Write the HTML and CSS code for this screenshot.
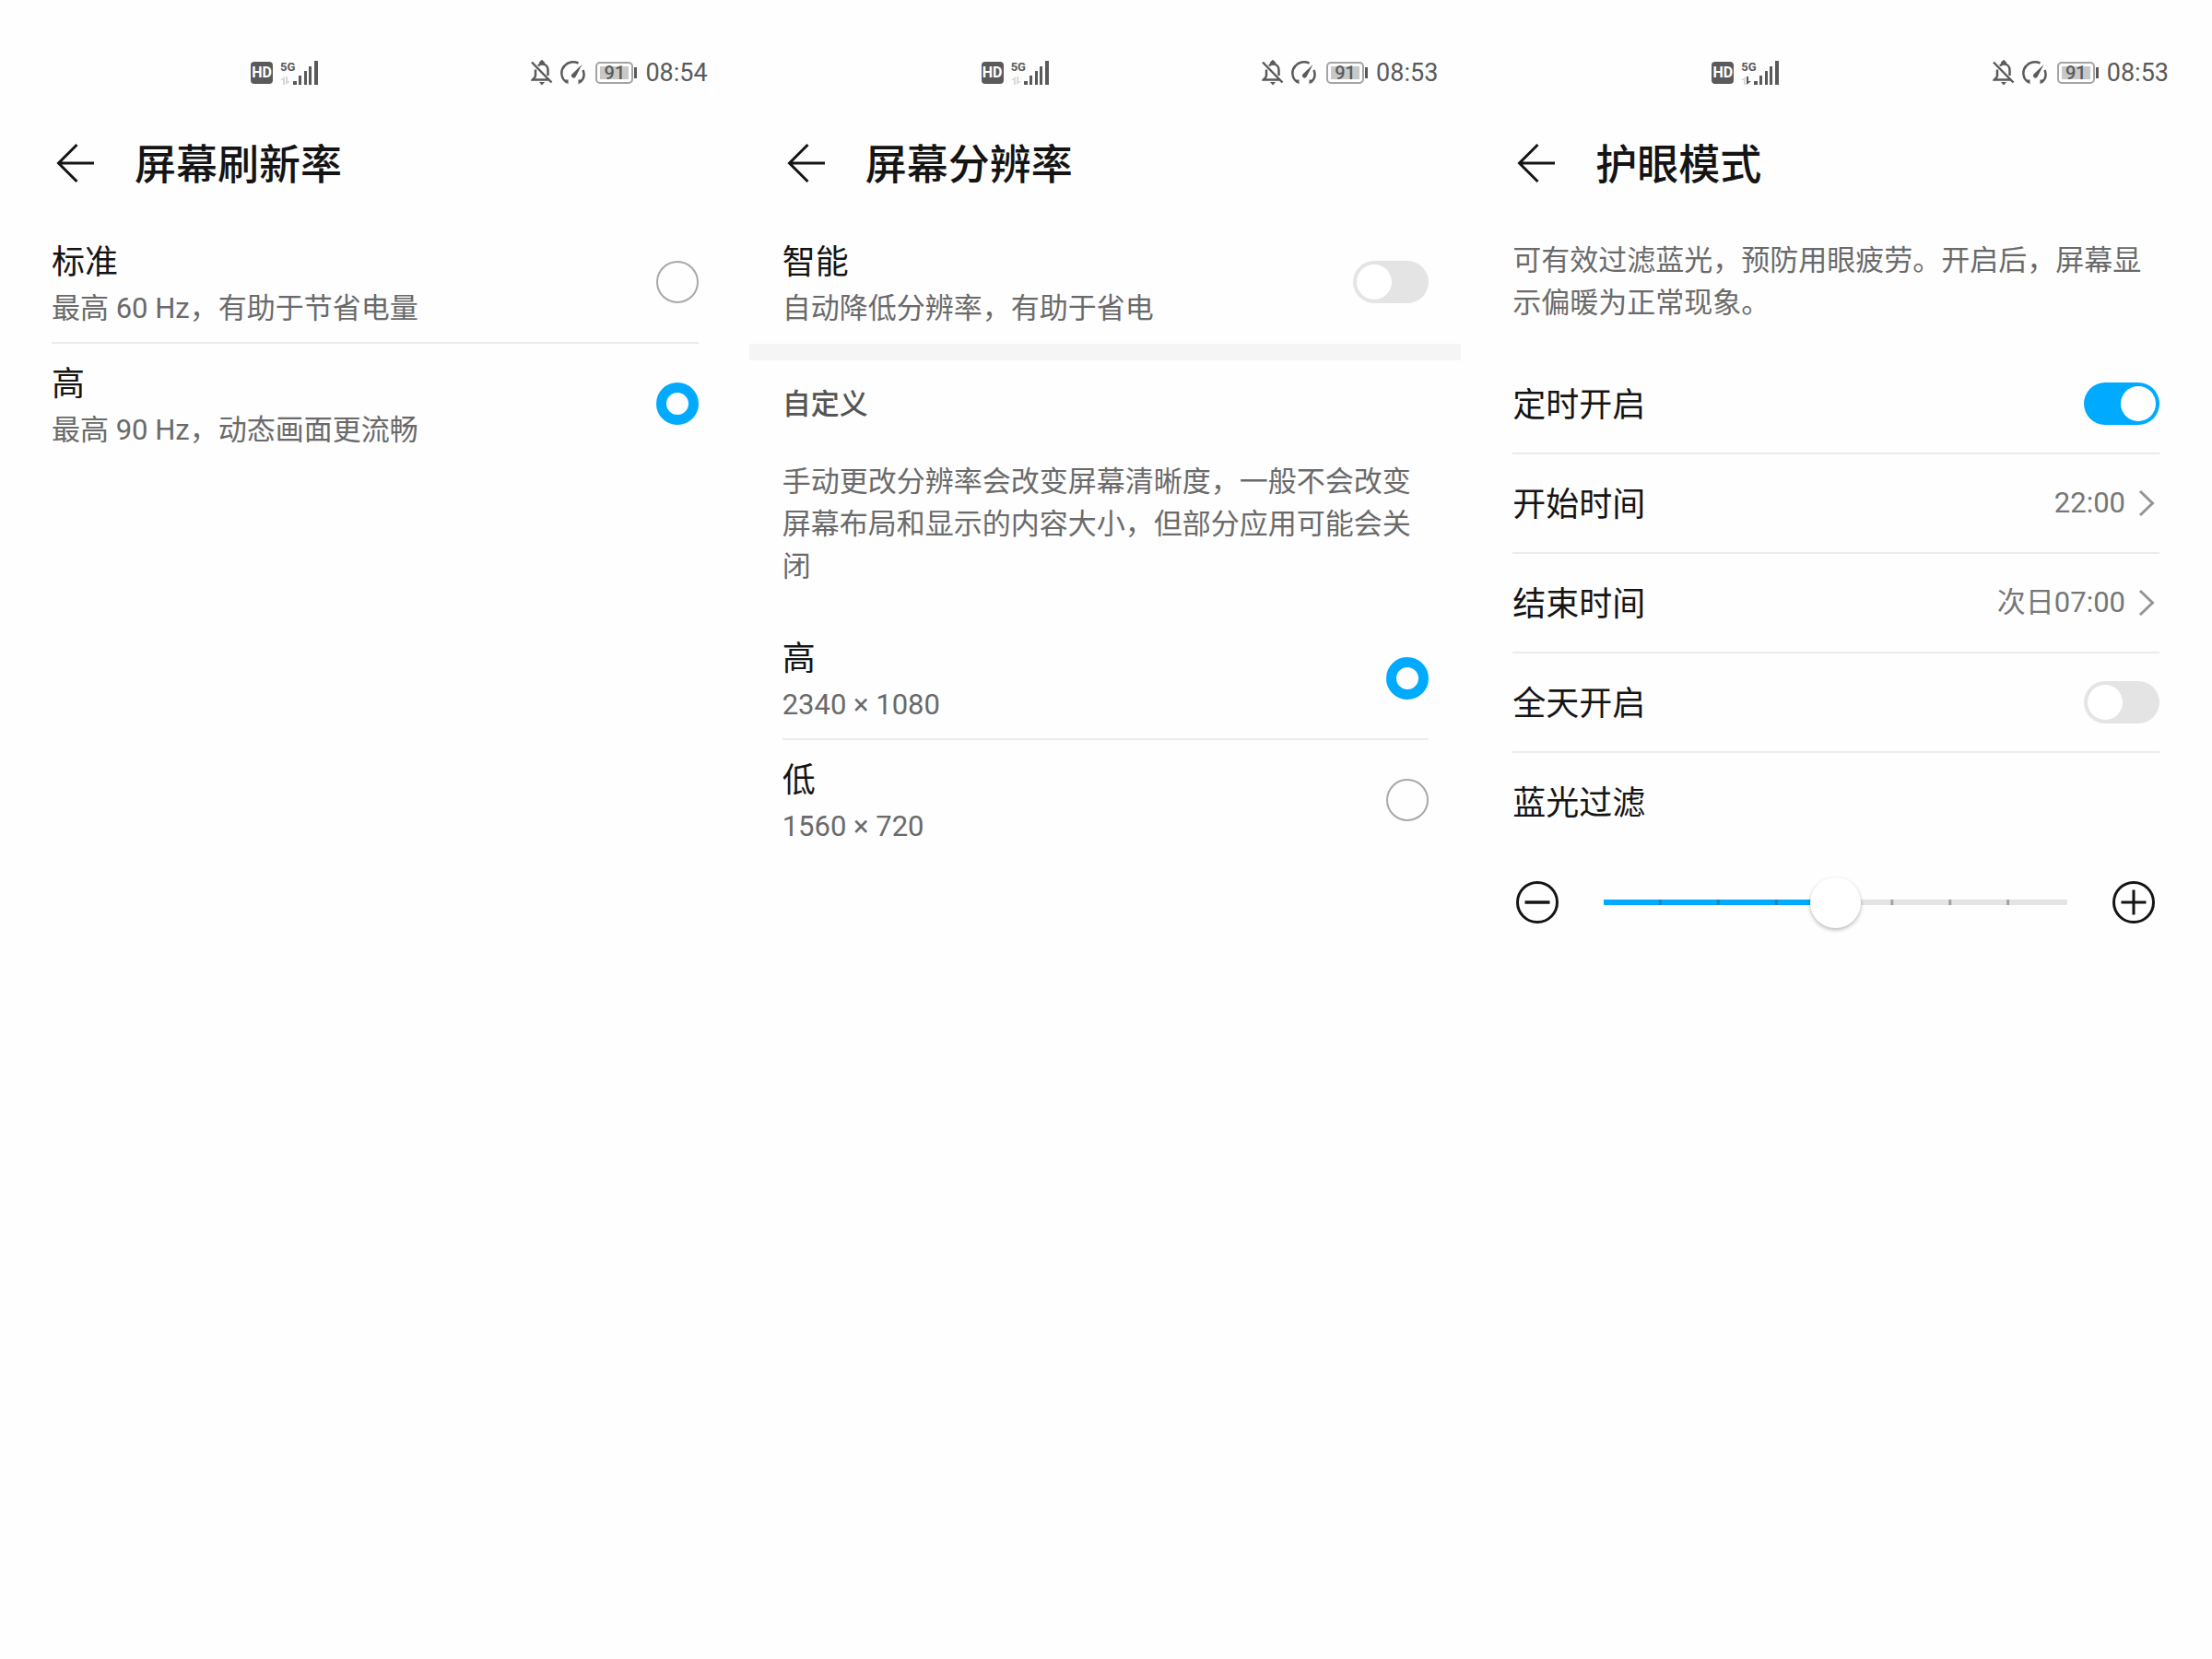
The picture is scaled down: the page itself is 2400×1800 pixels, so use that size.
FILE: index.html
```html
<!DOCTYPE html>
<html lang="zh-CN">
<head>
<meta charset="utf-8">
<meta name="viewport" content="width=device-width, initial-scale=1">
<title>显示设置</title>
<link rel="stylesheet" href="styles.css">
</head>
<body>
<svg class="sprite" aria-hidden="true">
  <symbol id="i-signal" viewBox="0 0 28 27">
    <rect x="0" y="22" width="4" height="4"/>
    <rect x="6" y="16" width="3" height="10"/>
    <rect x="12" y="11" width="3" height="15"/>
    <rect x="17" y="6" width="3" height="20"/>
    <rect x="23" y="0" width="4" height="26"/>
  </symbol>
  <symbol id="i-bell" viewBox="0 0 24 28">
    <path d="M1 2.500 22.500 24.500M8 6.500C9 5 10.500 4.500 12 4.500c4 0 6.500 3 6.500 6.500v6M5 10.500v6.500c0 2-1.500 3-3 4.500h17M9.500 4 12 1.500 14.500 4" fill="none" stroke="currentColor" stroke-width="2.500"/>
    <path d="M9 24h6l-3 3.500z" fill="currentColor"/>
  </symbol>
  <symbol id="i-gauge" viewBox="0 0 28 28">
    <path d="M7 24.500C0 20 0 11 4.500 6.500 8 2.500 14 1 19.500 3.500M24.500 11c2 5 1 10-3.500 13.500" fill="none" stroke="currentColor" stroke-width="2.500"/>
    <path d="M23.500 5 16.500 18.500a2.500 2.500 0 1 1-4-3z" fill="currentColor"/>
    <path d="M3.500 21.500h5v5zM24.500 21.500h-5v5z" fill="currentColor"/>
  </symbol>
  <symbol id="i-back" viewBox="0 0 42 44">
    <path d="M41 22H3M22.500 2 2.500 22l20 20" fill="none" stroke="currentColor" stroke-width="3"/>
  </symbol>
  <symbol id="i-next" viewBox="0 0 18 30">
    <path d="M2 2 15.500 15 2 28" fill="none" stroke="currentColor" stroke-width="3"/>
  </symbol>
  <symbol id="i-minus" viewBox="0 0 46 46">
    <circle cx="23" cy="23" r="21.500" fill="none" stroke="currentColor" stroke-width="3"/>
    <path d="M9.500 23h27" stroke="currentColor" stroke-width="3.500"/>
  </symbol>
  <symbol id="i-plus" viewBox="0 0 46 46">
    <circle cx="23" cy="23" r="21.500" fill="none" stroke="currentColor" stroke-width="3"/>
    <path d="M9.500 23h27M23 9.500v27" stroke="currentColor" stroke-width="3"/>
  </symbol>
  <symbol id="i-up" viewBox="0 0 5 9"><path d="M5 0v9H3V4H0z"/></symbol>
  <symbol id="i-down" viewBox="0 0 5 9"><path d="M0 9V0h2v5h3z"/></symbol>
</svg>

<main class="screens">
  <section class="screen">
    <div class="status">
      <div class="status-left">
        <span class="hd">HD</span>
        <div class="network">
          <span class="gen">5G</span>
          <span class="traffic"><svg class="arrow"><use href="#i-up"/></svg><svg class="arrow"><use href="#i-down"/></svg></span>
        </div>
        <svg class="signal"><use href="#i-signal"/></svg>
      </div>
      <div class="status-right">
        <svg class="bell"><use href="#i-bell"/></svg>
        <svg class="gauge"><use href="#i-gauge"/></svg>
        <span class="battery"><span class="level">91</span></span>
        <time class="clock">08:54</time>
      </div>
    </div>
    <header class="bar">
      <button class="back" type="button" aria-label="返回"><svg class="back-icon"><use href="#i-back"/></svg></button>
      <h1 class="title">屏幕刷新率</h1>
    </header>
    <div class="list">
      <label class="row">
        <span class="text"><span class="name">标准</span><span class="note">最高 60 Hz，有助于节省电量</span></span>
        <input class="radio" type="radio" name="rate">
      </label>
      <label class="row">
        <span class="text"><span class="name">高</span><span class="note">最高 90 Hz，动态画面更流畅</span></span>
        <input class="radio" type="radio" name="rate" checked>
      </label>
    </div>
  </section>

  <section class="screen">
    <div class="status">
      <div class="status-left">
        <span class="hd">HD</span>
        <div class="network">
          <span class="gen">5G</span>
          <span class="traffic"><svg class="arrow"><use href="#i-up"/></svg><svg class="arrow"><use href="#i-down"/></svg></span>
        </div>
        <svg class="signal"><use href="#i-signal"/></svg>
      </div>
      <div class="status-right">
        <svg class="bell"><use href="#i-bell"/></svg>
        <svg class="gauge"><use href="#i-gauge"/></svg>
        <span class="battery"><span class="level">91</span></span>
        <time class="clock">08:53</time>
      </div>
    </div>
    <header class="bar">
      <button class="back" type="button" aria-label="返回"><svg class="back-icon"><use href="#i-back"/></svg></button>
      <h1 class="title">屏幕分辨率</h1>
    </header>
    <div class="list">
      <label class="row">
        <span class="text"><span class="name">智能</span><span class="note">自动降低分辨率，有助于省电</span></span>
        <input class="switch" type="checkbox" role="switch">
      </label>
    </div>
    <div class="band"></div>
    <h2 class="group">自定义</h2>
    <p class="help help-group">手动更改分辨率会改变屏幕清晰度，一般不会改变屏幕布局和显示的内容大小，但部分应用可能会关闭</p>
    <div class="list">
      <label class="row">
        <span class="text"><span class="name">高</span><span class="note">2340 × 1080</span></span>
        <input class="radio" type="radio" name="resolution" checked>
      </label>
      <label class="row">
        <span class="text"><span class="name">低</span><span class="note">1560 × 720</span></span>
        <input class="radio" type="radio" name="resolution">
      </label>
    </div>
  </section>

  <section class="screen">
    <div class="status">
      <div class="status-left">
        <span class="hd">HD</span>
        <div class="network">
          <span class="gen">5G</span>
          <span class="traffic"><svg class="arrow"><use href="#i-up"/></svg><svg class="arrow arrow-active"><use href="#i-down"/></svg></span>
        </div>
        <svg class="signal"><use href="#i-signal"/></svg>
      </div>
      <div class="status-right">
        <svg class="bell"><use href="#i-bell"/></svg>
        <svg class="gauge"><use href="#i-gauge"/></svg>
        <span class="battery"><span class="level">91</span></span>
        <time class="clock">08:53</time>
      </div>
    </div>
    <header class="bar">
      <button class="back" type="button" aria-label="返回"><svg class="back-icon"><use href="#i-back"/></svg></button>
      <h1 class="title">护眼模式</h1>
    </header>
    <p class="help help-top">可有效过滤蓝光，预防用眼疲劳。开启后，屏幕显示偏暖为正常现象。</p>
    <div class="list">
      <label class="row row-single">
        <span class="name">定时开启</span>
        <input class="switch" type="checkbox" role="switch" checked>
      </label>
      <button class="row row-single" type="button">
        <span class="name">开始时间</span>
        <span class="value">22:00<svg class="next"><use href="#i-next"/></svg></span>
      </button>
      <button class="row row-single" type="button">
        <span class="name">结束时间</span>
        <span class="value">次日07:00<svg class="next"><use href="#i-next"/></svg></span>
      </button>
      <label class="row row-single">
        <span class="name">全天开启</span>
        <input class="switch" type="checkbox" role="switch">
      </label>
      <div class="row row-single">
        <label class="name" for="filter">蓝光过滤</label>
      </div>
    </div>
    <div class="slider">
      <button class="step" type="button" aria-label="减弱"><svg class="step-icon"><use href="#i-minus"/></svg></button>
      <input class="range" id="filter" type="range" min="0" max="8" value="4" style="--fill: 50%">
      <button class="step" type="button" aria-label="增强"><svg class="step-icon"><use href="#i-plus"/></svg></button>
    </div>
  </section>
</main>
</body>
</html>
```

FILE: styles.css
```css
:root {
  --accent: #00aaff;
  --ink: #141414;
  --muted: #6a6a6a;
  --status: #5a5a5a;
  --line: #ebebeb;
  --side: 36px;
}

* {
  box-sizing: border-box;
}

body {
  margin: 0;
  background: #fefefe;
  color: var(--ink);
  font-family: Roboto, "Noto Sans CJK SC", sans-serif;
}

button {
  margin: 0;
  padding: 0;
  border: 0;
  background: none;
  color: inherit;
  font: inherit;
  text-align: left;
}

svg {
  display: block;
  fill: currentColor;
}

.sprite {
  display: none;
}

.screens {
  display: grid;
  grid-template-columns: repeat(3, minmax(0, 1fr));
  gap: 20px;
  padding: 55px 22px 55px 20px;
}

/* Status bar */
.status {
  display: flex;
  align-items: center;
  justify-content: space-between;
  height: 48px;
  padding: 0 25px 0 252px;
  color: var(--status);
}

.status-left,
.status-right {
  display: flex;
  align-items: center;
}

.hd {
  width: 24px;
  margin-right: 8px;
  border-radius: 4px;
  background: var(--status);
  color: #fff;
  font-size: 16px;
  font-weight: 700;
  line-height: 24px;
  text-align: center;
}

.network {
  width: 14px;
}

.gen {
  display: block;
  font-size: 13px;
  font-weight: 700;
  line-height: 14px;
}

.traffic {
  display: flex;
  gap: 1px;
  padding-top: 3px;
  color: #d8d8d8;
}

.arrow {
  width: 5px;
  height: 9px;
}

.arrow-active {
  color: var(--status);
}

.signal {
  width: 28px;
  height: 27px;
}

.bell {
  width: 24px;
  height: 28px;
  margin-right: 8px;
}

.gauge {
  width: 28px;
  height: 28px;
  margin-right: 10px;
}

.battery {
  position: relative;
  width: 41px;
  margin-right: 13px;
  padding: 3px;
  border: 2px solid #a4a4a4;
  border-radius: 5px;
}

.battery::after {
  content: "";
  position: absolute;
  top: 4px;
  right: -6px;
  width: 3px;
  height: 12px;
  background: var(--status);
}

.level {
  display: block;
  background: #c8c8c8;
  font-size: 20px;
  font-weight: 500;
  line-height: 14px;
  text-align: center;
}

.clock {
  font-size: 27px;
  line-height: 32px;
}

/* Title bar */
.bar {
  display: flex;
  align-items: center;
  gap: 43px;
  height: 128px;
  margin-top: 10px;
  padding: 0 41px;
}

.back-icon {
  width: 42px;
  height: 44px;
}

.title {
  margin: 0;
  padding-top: 6px;
  font-size: 45px;
  font-weight: 500;
  line-height: 60px;
}

/* Setting rows */
.list {
  padding: 0 35px 0 var(--side);
}

.row {
  display: flex;
  align-items: center;
  justify-content: space-between;
  box-sizing: content-box;
  width: 100%;
  min-height: 130px;
}

.row-single {
  min-height: 106px;
}

.row + .row {
  border-top: 2px solid var(--line);
}

.text {
  padding-top: 8px;
}

.name,
.note {
  display: block;
  line-height: 50px;
}

.name {
  font-size: 36px;
}

.row-single .name {
  padding-top: 4px;
}

.note {
  color: var(--muted);
  font-size: 31px;
}

.value {
  display: flex;
  align-items: center;
  gap: 14px;
  padding-right: 5px;
  color: #777;
  font-size: 31px;
  line-height: 40px;
}

.next {
  width: 18px;
  height: 30px;
  color: #959595;
}

.band {
  height: 18px;
  margin-top: 2px;
  background: #f5f5f5;
}

.group {
  margin: 0;
  padding: 0 var(--side);
  color: #555;
  font-size: 31px;
  font-weight: 500;
  line-height: 96px;
}

.help {
  margin: 0;
  color: var(--muted);
  font-size: 31px;
  line-height: 46px;
}

.help-group {
  padding: 13px var(--side) 33px;
}

.help-top {
  padding: 19px var(--side) 33px;
}

/* Controls */
.radio,
.switch,
.range {
  margin: 0;
  appearance: none;
}

.radio {
  flex: none;
  width: 46px;
  height: 46px;
  border: 2px solid #a8a8a8;
  border-radius: 50%;
}

.radio:checked {
  border: 11px solid var(--accent);
}

.switch {
  display: flex;
  flex: none;
  width: 82px;
  height: 46px;
  padding: 4px;
  border-radius: 23px;
  background: #e4e4e4;
}

.switch::before {
  content: "";
  width: 38px;
  height: 38px;
  border-radius: 50%;
  background: #fff;
}

.switch:checked {
  justify-content: flex-end;
  background: var(--accent);
}

.slider {
  display: flex;
  align-items: center;
  gap: 49px;
  height: 112px;
  padding: 0 40px;
}

.step-icon {
  width: 46px;
  height: 46px;
}

.range {
  flex: 1;
  min-width: 0;
  height: 56px;
  background:
    linear-gradient(#e4e4e4, #e4e4e4) right center / 3px 6px no-repeat,
    linear-gradient(to left, rgb(80 80 80 / 45%) 3px, transparent 3px) left center / 12.5% 6px repeat-x,
    linear-gradient(var(--accent), var(--accent)) left center / var(--fill) 6px no-repeat,
    linear-gradient(#e4e4e4, #e4e4e4) center / 100% 6px no-repeat;
}

.range::-webkit-slider-thumb {
  width: 55px;
  height: 55px;
  border-radius: 50%;
  background: #fff;
  box-shadow: 0 2px 4px rgb(0 0 0 / 28%);
  appearance: none;
}
```
